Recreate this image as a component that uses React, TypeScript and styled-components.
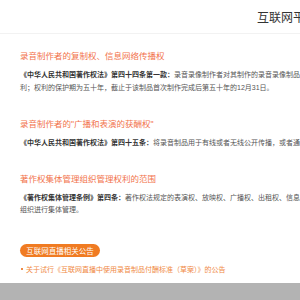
import React from "react";
import styled, { createGlobalStyle } from "styled-components";

const GlobalStyle = createGlobalStyle`
    html, body {
        margin: 0;
        padding: 0;
        overflow: hidden;
        background: #ffffff;
        font-family: "Liberation Sans", "Noto Sans CJK SC", sans-serif;
    }
`;

const Page = styled.div`
    width: 300px;
    height: 300px;
    display: flex;
    flex-direction: column;
    overflow: hidden;
`;

const Header = styled.div`
    height: 33px;
    flex-shrink: 0;
    border-bottom: 1px solid #f2f2f2;
    display: flex;
    align-items: center;
    padding-left: 257px;
    white-space: nowrap;
`;

const HeaderTitle = styled.span`
    font-size: 12px;
    color: #333333;
`;

const Main = styled.div`
    flex: 1;
    padding: 16px 0 0 20px;
    display: flex;
    flex-direction: column;
`;

const Section = styled.div<{ $gap: number }>`
    margin-bottom: ${(p) => p.$gap}px;
`;

const Title = styled.div`
    font-size: 8.5px;
    line-height: 12px;
    color: #f2734c;
    white-space: nowrap;
    margin-bottom: 7px;
`;

const Para = styled.p`
    margin: 0;
    font-size: 7px;
    line-height: 12.5px;
    color: #555555;
    white-space: nowrap;
`;

const Strong = styled.b`
    color: #333333;
    font-weight: bold;
`;

const Pill = styled.div`
    align-self: flex-start;
    height: 13px;
    width: 80px;
    border-radius: 7px;
    background: #f07b22;
    color: #ffffff;
    font-size: 7.5px;
    display: flex;
    align-items: center;
    justify-content: center;
    white-space: nowrap;
    margin-bottom: 7px;
`;

const NoticeItem = styled.div`
    display: flex;
    align-items: center;
    gap: 3px;
    font-size: 7px;
    line-height: 11px;
    color: #f08a45;
    white-space: nowrap;
    padding-left: 1px;
`;

const Dot = styled.span`
    width: 2px;
    height: 2px;
    background: #f08a45;
`;

const Footer = styled.div`
    height: 17px;
    flex-shrink: 0;
    background: #b3b3b3;
`;

export default function App() {
    return (
        <Page>
            <GlobalStyle />
            <Header>
                <HeaderTitle>互联网平台录音制品使用付酬标准</HeaderTitle>
            </Header>
            <Main>
                <Section $gap={24}>
                    <Title>录音制作者的复制权、信息网络传播权</Title>
                    <Para>
                        <Strong>《中华人民共和国著作权法》第四十四条第一款：</Strong>录音录像制作者对其制作的录音录像制品，享有许可他人复制、发行、出租、通过信息网络向公众传播并获得报酬的权
                        <br />
                        利；权利的保护期为五十年，截止于该制品首次制作完成后第五十年的12月31日。
                    </Para>
                </Section>
                <Section $gap={23}>
                    <Title>录音制作者的"广播和表演的获酬权"</Title>
                    <Para>
                        <Strong>《中华人民共和国著作权法》第四十五条：</Strong>将录音制品用于有线或者无线公开传播，或者通过传送声音的技术设备向公众公开播送的，应当向录音制作者支付报酬。
                    </Para>
                </Section>
                <Section $gap={27}>
                    <Title>著作权集体管理组织管理权利的范围</Title>
                    <Para>
                        <Strong>《著作权集体管理条例》第四条：</Strong>著作权法规定的表演权、放映权、广播权、出租权、信息网络传播权、复制权等权利人自己难以有效行使的权利，可以由著作权集体管理
                        <br />
                        组织进行集体管理。
                    </Para>
                </Section>
                <Pill>互联网直播相关公告</Pill>
                <NoticeItem>
                    <Dot />
                    关于试行《互联网直播中使用录音制品付酬标准（草案）》的公告
                </NoticeItem>
            </Main>
            <Footer />
        </Page>
    );
}
